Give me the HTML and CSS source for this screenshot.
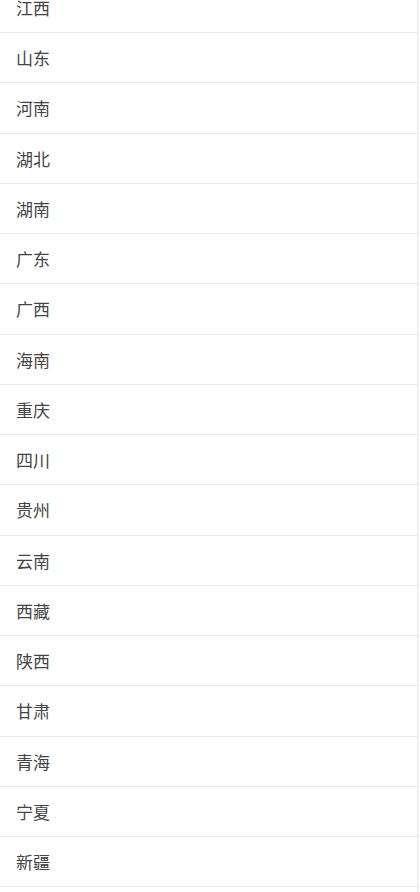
FILE: index.html
```html
<!DOCTYPE html>
<html lang="zh">
<head>
<meta charset="utf-8">
<title>省份</title>
<link rel="stylesheet" href="styles.css">
</head>
<body>
<div class="page">
  <ul class="list">
    <li class="item">江西</li>
    <li class="item">山东</li>
    <li class="item">河南</li>
    <li class="item">湖北</li>
    <li class="item">湖南</li>
    <li class="item">广东</li>
    <li class="item">广西</li>
    <li class="item">海南</li>
    <li class="item">重庆</li>
    <li class="item">四川</li>
    <li class="item">贵州</li>
    <li class="item">云南</li>
    <li class="item">西藏</li>
    <li class="item">陕西</li>
    <li class="item">甘肃</li>
    <li class="item">青海</li>
    <li class="item">宁夏</li>
    <li class="item">新疆</li>
  </ul>
  <div class="rail"></div>
</div>
</body>
</html>
```

FILE: styles.css
```css
html, body {
  margin: 0;
  padding: 0;
  background: #ffffff;
  height: 892px;
  overflow: hidden;
}

.page {
  display: flex;
  height: 892px;
}

.list {
  list-style: none;
  margin: -17.25px 0 0 0;
  padding: 0;
  flex: 1;
}

.item {
  box-sizing: border-box;
  height: 50.25px;
  display: flex;
  align-items: center;
  padding-left: 16px;
  border-bottom: 1px solid #e9e9e9;
  font-family: "Noto Sans CJK SC", "Noto Sans", sans-serif;
  font-size: 17px;
  color: #444444;
}

.rail {
  width: 3px;
  border-left: 1px solid #ececec;
  background: #f6f6f6;
  box-sizing: border-box;
}
```
